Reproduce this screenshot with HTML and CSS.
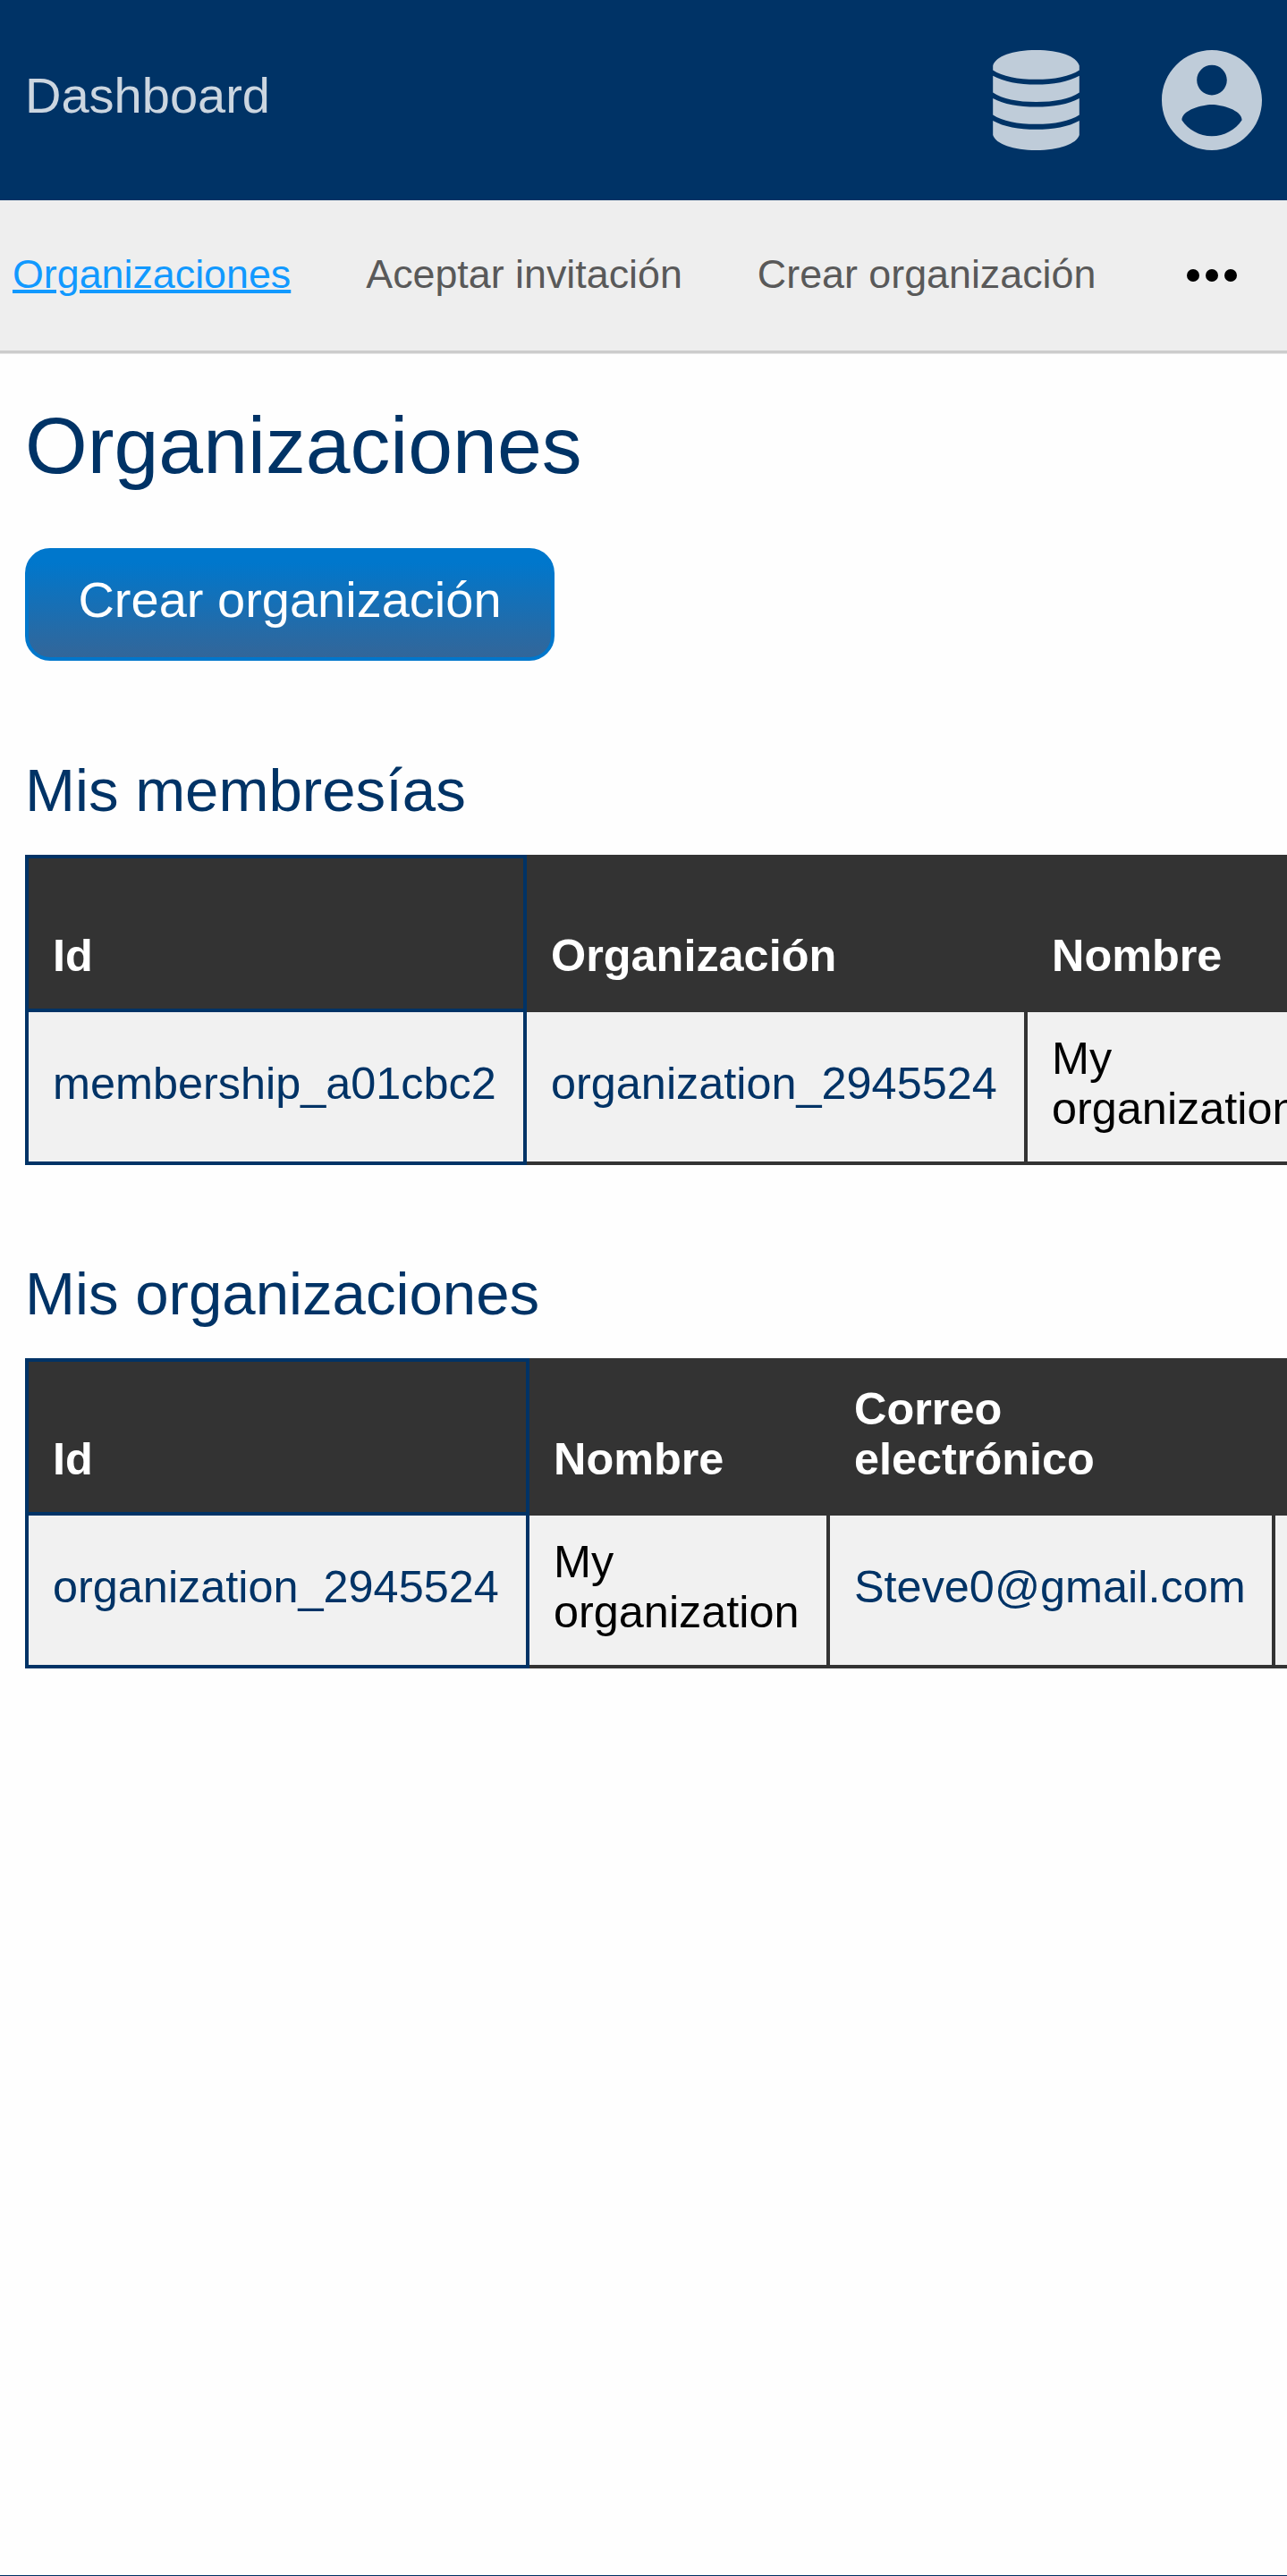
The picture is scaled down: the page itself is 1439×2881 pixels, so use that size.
FILE: index.html
```html
<!DOCTYPE html>
<html lang="es">
<head>
<meta charset="utf-8">
<title>Dashboard</title>
<link rel="stylesheet" href="styles.css">
</head>
<body>
<header class="topbar">
  <a class="brand">Dashboard</a>
  <div class="topbar-icons">
    <svg class="icon-db" viewBox="0 0 96.6 112" fill="currentColor"><path d="M0 17.5C3 7 22 0 48.300 0S93.600 7 96.600 17.500V22.500C86 29.500 69 32.800 48.300 32.800S10.600 29.500 0 22.500zM0 28.800C12 35.500 29 38.600 48.300 38.600S84.600 35.500 96.600 28.800V47.500C86 54.800 69 58 48.300 58S10.600 54.800 0 47.500zM0 54C12 60.600 29 63.600 48.300 63.600S84.600 60.600 96.600 54V72.500C86 79.500 69 82.800 48.300 82.800S10.600 79.500 0 72.500zM0 79C12 85.800 29 88.800 48.300 88.800S84.600 85.800 96.600 79V95C93.600 105 74 112 48.300 112S3 105 0 95z"/></svg>
    <svg class="icon-user" viewBox="2 2 20 20" fill="currentColor"><path d="M12 2C6.480 2 2 6.480 2 12s4.480 10 10 10 10-4.480 10-10S17.520 2 12 2zm0 3c1.660 0 3 1.340 3 3s-1.340 3-3 3-3-1.340-3-3 1.340-3 3-3zm0 14.200c-2.500 0-4.710-1.280-6-3.220.030-1.990 4-3.080 6-3.080 1.990 0 5.970 1.090 6 3.080-1.290 1.940-3.500 3.220-6 3.220z"/></svg>
  </div>
</header>
<nav class="subnav">
  <a class="subnav-link active">Organizaciones</a>
  <a class="subnav-link">Aceptar invitación</a>
  <a class="subnav-link">Crear organización</a>
  <svg class="icon-more" viewBox="0 0 24 24"><circle cx="6" cy="12" r="2"/><circle cx="12" cy="12" r="2"/><circle cx="18" cy="12" r="2"/></svg>
</nav>
<main class="content">
  <h1 class="title">Organizaciones</h1>
  <button class="button" type="button">Crear organización</button>
  <section class="section">
    <h2 class="subtitle">Mis membresías</h2>
    <table class="grid memberships">
      <colgroup><col class="col-id"><col class="col-org"><col class="col-name"></colgroup>
      <thead><tr><th>Id</th><th>Organización</th><th>Nombre</th></tr></thead>
      <tbody><tr><td><a>membership_a01cbc2</a></td><td><a>organization_2945524</a></td><td>My organization</td></tr></tbody>
    </table>
  </section>
  <section class="section">
    <h2 class="subtitle">Mis organizaciones</h2>
    <table class="grid organizations">
      <colgroup><col class="col-id"><col class="col-name"><col class="col-mail"><col class="col-extra"></colgroup>
      <thead><tr><th>Id</th><th>Nombre</th><th>Correo<br>electrónico</th><th></th></tr></thead>
      <tbody><tr><td><a>organization_2945524</a></td><td>My organization</td><td><a>Steve0@gmail.com</a></td><td></td></tr></tbody>
    </table>
  </section>
</main>
<footer class="footer"></footer>
</body>
</html>
```
FILE: styles.css
```css
* { box-sizing: border-box; }

body {
  margin: 0;
  height: 2881px;
  display: flex;
  flex-direction: column;
  overflow: hidden;
  background: #fefefe;
  color: #000;
  font-family: "Liberation Sans", Arial, sans-serif;
  font-size: 56px;
}

.topbar {
  flex: none;
  height: 224px;
  padding: 0 28px;
  display: flex;
  align-items: center;
  justify-content: space-between;
  background: #003366;
}
.brand {
  line-height: 64px;
  padding-bottom: 11px;
  color: #ccd6e0;
}
.topbar-icons {
  display: flex;
  align-items: center;
  gap: 92px;
  color: #bfccd9;
}
.icon-db { width: 97px; height: 112px; }
.icon-user { width: 112px; height: 112px; }

.subnav {
  flex: none;
  height: 171px;
  padding: 0 42px 0 14px;
  display: flex;
  align-items: center;
  gap: 84px;
  background: #eee;
  border-bottom: 3px solid #ccc;
  box-shadow: 0 1px 0 #e5e5e5;
  font-size: 44.8px;
}
.subnav-link {
  color: #595959;
  line-height: 52px;
  padding-bottom: 4px;
  white-space: nowrap;
}
.subnav-link.active {
  color: #1199ff;
  text-decoration: underline;
  text-decoration-thickness: 4px;
}
.icon-more { width: 84px; height: 84px; margin-left: auto; }

.content {
  flex: 1;
  min-width: 0;
  padding: 51px 0 0 28px;
  overflow: hidden;
}
.title, .subtitle {
  margin: 0;
  font-weight: 400;
  color: #003366;
}
.title {
  font-size: 89.6px;
  line-height: 104px;
}
.button {
  display: block;
  width: 592px;
  height: 126px;
  margin-top: 63px;
  padding: 0 0 12px;
  border: 4px solid #0077cc;
  border-radius: 28px;
  background: linear-gradient(#0077cc 10%, #336699);
  color: #fff;
  font: inherit;
}
.section { margin-top: 106px; }
.section + .section { margin-top: 105px; }
.subtitle {
  font-size: 67.2px;
  line-height: 78px;
  margin-bottom: 33px;
}

.grid {
  table-layout: fixed;
  border-collapse: collapse;
  font-size: 50.4px;
  line-height: 56px;
}
.grid th, .grid td {
  height: 171.5px;
  padding: 24px 27px 31px;
  border: 4px solid #333;
  text-align: left;
}
.grid th {
  background: #333;
  color: #fff;
  vertical-align: bottom;
}
.grid td {
  background: #f1f1f1;
  vertical-align: middle;
}
.grid th:first-child, .grid td:first-child { border-color: #003366; }
.grid a { color: #003366; }

.memberships { width: 1453px; }
.memberships .col-id { width: 557px; }
.memberships .col-org { width: 560px; }
.memberships .col-name { width: 336px; }
.organizations { width: 1694px; }
.organizations .col-id { width: 560px; }
.organizations .col-name { width: 336px; }
.organizations .col-mail { width: 498px; }
.organizations .col-extra { width: 300px; }

.footer {
  flex: none;
  height: 1px;
  background: #003366;
}
```
